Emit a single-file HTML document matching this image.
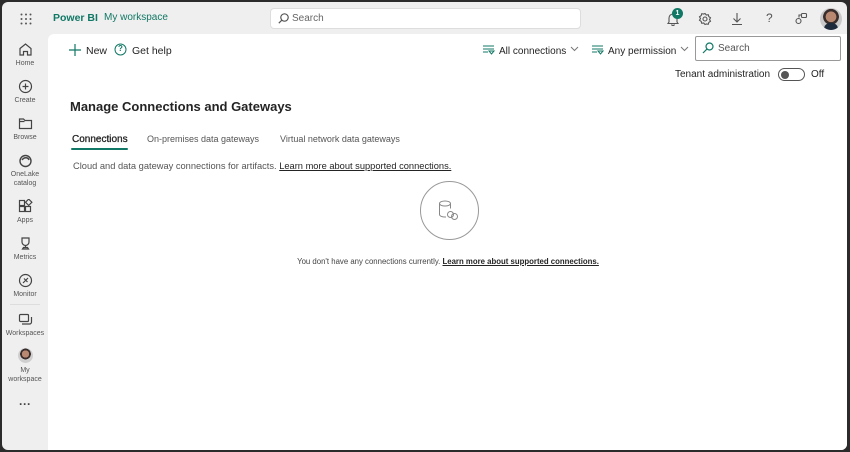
<!DOCTYPE html>
<html><head><meta charset="utf-8"><style>
*{box-sizing:border-box;margin:0;padding:0}
body{width:850px;height:452px;overflow:hidden;background:#2b2b2b;font-family:"Liberation Sans",sans-serif;color:#242424;position:relative}
#win{position:absolute;left:2px;top:2px;width:845px;height:448px;background:#efefef;border-radius:6px;overflow:hidden}
#panel{position:absolute;left:46px;top:32px;width:800px;height:418px;background:#fff;border-radius:6px 0 0 0}
.abs{position:absolute}
.nav{position:absolute;left:0;width:46px;text-align:center;font-size:7px;color:#555;line-height:9px}
.nav svg{display:block;margin:0 auto 2px}
.t{position:absolute;white-space:nowrap}
</style></head><body>
<div id="win">
<svg class="abs" style="left:18px;top:11px" width="12" height="12" fill="#555"><circle cx="1.5" cy="1.5" r="1"/><circle cx="6" cy="1.5" r="1"/><circle cx="10.5" cy="1.5" r="1"/><circle cx="1.5" cy="6" r="1"/><circle cx="6" cy="6" r="1"/><circle cx="10.5" cy="6" r="1"/><circle cx="1.5" cy="10.5" r="1"/><circle cx="6" cy="10.5" r="1"/><circle cx="10.5" cy="10.5" r="1"/></svg>
<div class="t" style="left:51px;top:10px;font-size:10.5px;font-weight:bold;color:#117865">Power BI</div>
<div class="t" style="left:102px;top:10px;font-size:10px;color:#117865">My workspace</div>
<div class="abs" style="left:268px;top:6px;width:311px;height:21px;background:#fff;border:1px solid #ddd;border-radius:4px"></div>
<svg class="abs" style="left:276px;top:11px" width="11" height="11" fill="none" stroke="#555" stroke-width="1.2"><circle cx="6.5" cy="4.5" r="3.7"/><path d="M3.8 7.2L.8 10.2"/></svg>
<div class="t" style="left:290px;top:11px;font-size:10px;color:#666">Search</div>
<svg class="abs" style="left:664px;top:10px" width="14" height="14" fill="none" stroke="#555" stroke-width="1.1"><path d="M3 10V6a4 4 0 018 0v4l1 1.5H2z"/><path d="M5.5 12.5a1.6 1.6 0 003 0"/></svg>
<div class="abs" style="left:670px;top:6px;width:11px;height:11px;border-radius:50%;background:#117865;color:#fff;font-size:7px;text-align:center;line-height:11px;font-weight:bold">1</div>
<svg class="abs" style="left:696px;top:10px" width="14" height="14" fill="none" stroke="#555" stroke-width="1.1"><circle cx="7" cy="7" r="2"/><path d="M7 1.5l1.3 1.5 2-.3.5 1.9 1.7 1.2-1 1.7 1 1.7-1.7 1.2-.5 1.9-2-.3L7 12.5 5.7 11l-2 .3-.5-1.9L1.5 8.2l1-1.7-1-1.7 1.7-1.2.5-1.9 2 .3z"/></svg>
<svg class="abs" style="left:728px;top:10px" width="14" height="14" fill="none" stroke="#555" stroke-width="1.1"><path d="M7 1v9M3.5 6.5L7 10l3.5-3.5M2 12.5h10"/></svg>
<div class="t" style="left:764px;top:9px;font-size:12px;color:#555">?</div>
<svg class="abs" style="left:792px;top:10px" width="14" height="14" fill="none" stroke="#555" stroke-width="1.1"><circle cx="4.5" cy="9" r="2.5"/><rect x="7.5" y="1.5" width="5" height="4" rx="1"/><path d="M5 5.5V3h2.5"/></svg>
<div class="abs" style="left:818px;top:6px;width:22px;height:22px;border-radius:50%;background:radial-gradient(circle at 50% 40%,#b98870 0 30%,#3a2e2c 32% 45%,#c9c9c9 47%);overflow:hidden"><div style="position:absolute;left:4px;top:15px;width:14px;height:10px;border-radius:6px 6px 0 0;background:#1c2a3c"></div></div>

<div class="nav" style="top:40px"><svg width="15" height="15" fill="none" stroke="#444" stroke-width="1.2"><path d="M2 6.5L7.5 2 13 6.5V13H9.5V9.5h-4V13H2z"/></svg>Home</div>
<div class="nav" style="top:77px"><svg width="15" height="15" fill="none" stroke="#444" stroke-width="1.2"><circle cx="7.5" cy="7.5" r="6"/><path d="M7.5 4.5v6M4.5 7.5h6"/></svg>Create</div>
<div class="nav" style="top:114px"><svg width="15" height="15" fill="none" stroke="#444" stroke-width="1.2"><path d="M1.5 3h4l1.5 1.5h6.5V12.5h-12zM1.5 5.5h5"/></svg>Browse</div>
<div class="nav" style="top:151px"><svg width="15" height="15" fill="none" stroke="#444" stroke-width="1.4"><circle cx="7.5" cy="8" r="5.5"/><path d="M4 7c2-3 6-3 7 0" /></svg>OneLake<br>catalog</div>
<div class="nav" style="top:197px"><svg width="15" height="15" fill="none" stroke="#444" stroke-width="1.2"><rect x="1.5" y="7.5" width="5" height="5"/><rect x="7.5" y="7.5" width="5" height="5"/><rect x="1.5" y="1.5" width="5" height="5"/><rect x="8.5" y="1" width="4.5" height="4.5" transform="rotate(45 10.7 3.2)"/></svg>Apps</div>
<div class="nav" style="top:234px"><svg width="15" height="15" fill="none" stroke="#444" stroke-width="1.2"><path d="M4 2h7v4a3.5 3.5 0 01-7 0zM7.5 9.5v2M4.5 13h6l-1-1.5h-4z"/></svg>Metrics</div>
<div class="nav" style="top:271px"><svg width="15" height="15" fill="none" stroke="#444" stroke-width="1.2"><circle cx="7.5" cy="7.5" r="6"/><path d="M5 10l5-5M6 5.5l3.5 3.5"/></svg>Monitor</div>
<div class="abs" style="left:8px;top:302px;width:30px;height:1px;background:#ddd"></div>
<div class="nav" style="top:310px"><svg width="15" height="15" fill="none" stroke="#444" stroke-width="1.2"><rect x="1.5" y="2.5" width="9" height="7" rx="1"/><path d="M4 12h7.5a2 2 0 002-2V5"/></svg>Workspaces</div>
<div class="abs" style="left:16px;top:346px;width:15px;height:15px;border-radius:50%;background:radial-gradient(circle at 50% 40%,#b98870 0 30%,#3a2e2c 32% 45%,#cfcfcf 47%)"></div>
<div class="nav" style="top:364px">My<br>workspace</div>
<div class="t" style="left:17px;top:398px;font-size:12px;color:#444;font-weight:bold;line-height:8px">···</div>

<div id="panel">
<svg class="abs" style="left:21px;top:10px" width="12" height="12" stroke="#117865" stroke-width="1.2"><path d="M6 0v12M0 6h12"/></svg>
<div class="t" style="left:38px;top:11px;font-size:10.5px">New</div>
<svg class="abs" style="left:66px;top:9px" width="13" height="13" fill="none" stroke="#117865" stroke-width="1"><circle cx="6.5" cy="6.5" r="5.5"/></svg>
<div class="t" style="left:70px;top:10px;font-size:8px;color:#117865;font-weight:bold">?</div>
<div class="t" style="left:84px;top:11px;font-size:10.5px">Get help</div>

<svg class="abs" style="left:435px;top:10px" width="12" height="12" fill="none" stroke="#117865" stroke-width="1"><path d="M0 2h11M0 5h11M0 8h5M6 7h5l-2.5 3z"/></svg>
<div class="t" style="left:451px;top:12px;font-size:10px">All connections</div>
<svg class="abs" style="left:522px;top:12px" width="9" height="6" fill="none" stroke="#777"><path d="M1 1l3.5 3.5L8 1"/></svg>
<svg class="abs" style="left:544px;top:10px" width="12" height="12" fill="none" stroke="#117865" stroke-width="1"><path d="M0 2h11M0 5h11M0 8h5M6 7h5l-2.5 3z"/></svg>
<div class="t" style="left:560px;top:12px;font-size:10px">Any permission</div>
<svg class="abs" style="left:632px;top:12px" width="9" height="6" fill="none" stroke="#777"><path d="M1 1l3.5 3.5L8 1"/></svg>
<div class="abs" style="left:647px;top:2px;width:146px;height:25px;border:1px solid #999;border-radius:2px"></div>
<svg class="abs" style="left:654px;top:8px" width="12" height="12" fill="none" stroke="#117865" stroke-width="1.2"><circle cx="7.5" cy="4.5" r="3.5"/><path d="M5 7L1 11"/></svg>
<div class="t" style="left:670px;top:9px;font-size:10px;color:#555">Search</div>

<div class="t" style="left:627px;top:35px;font-size:10px">Tenant administration</div>
<div class="abs" style="left:730px;top:34px;width:27px;height:13px;border:1px solid #555;border-radius:7px"></div>
<div class="abs" style="left:733px;top:37px;width:8px;height:8px;border-radius:50%;background:#555"></div>
<div class="t" style="left:763px;top:35px;font-size:10px">Off</div>

<div class="t" style="left:22px;top:65px;font-size:13px;font-weight:bold;color:#242424">Manage Connections and Gateways</div>
<div class="t" style="left:24px;top:100px;font-size:10px;color:#242424;-webkit-text-stroke:0.3px #242424">Connections</div>
<div class="abs" style="left:23px;top:114px;width:57px;height:2px;background:#117865;border-radius:1px"></div>
<div class="t" style="left:99px;top:100px;font-size:9px;color:#555">On-premises data gateways</div>
<div class="t" style="left:232px;top:100px;font-size:9px;color:#555">Virtual network data gateways</div>
<div class="t" style="left:25px;top:127px;font-size:9.3px;color:#555">Cloud and data gateway connections for artifacts. <span style="text-decoration:underline;color:#242424">Learn more about supported connections.</span></div>

<div class="abs" style="left:372px;top:147px;width:59px;height:59px;border:1px solid #999;border-radius:50%"></div>
<svg class="abs" style="left:390px;top:166px" width="24" height="22" fill="none" stroke="#888" stroke-width="1"><ellipse cx="7" cy="3.5" rx="5.5" ry="2.5"/><path d="M1.5 3.5v11c0 1.4 2.5 2.5 5.5 2.5h1M12.5 3.5v5"/><circle cx="12.5" cy="14.5" r="3"/><circle cx="16.5" cy="16.5" r="3"/></svg>
<div class="t" style="left:0;width:800px;text-align:center;top:223px;font-size:7.8px;color:#444">You don't have any connections currently. <span style="text-decoration:underline;font-weight:bold;color:#242424">Learn more about supported connections.</span></div>
</div>
</div>
</body></html>
